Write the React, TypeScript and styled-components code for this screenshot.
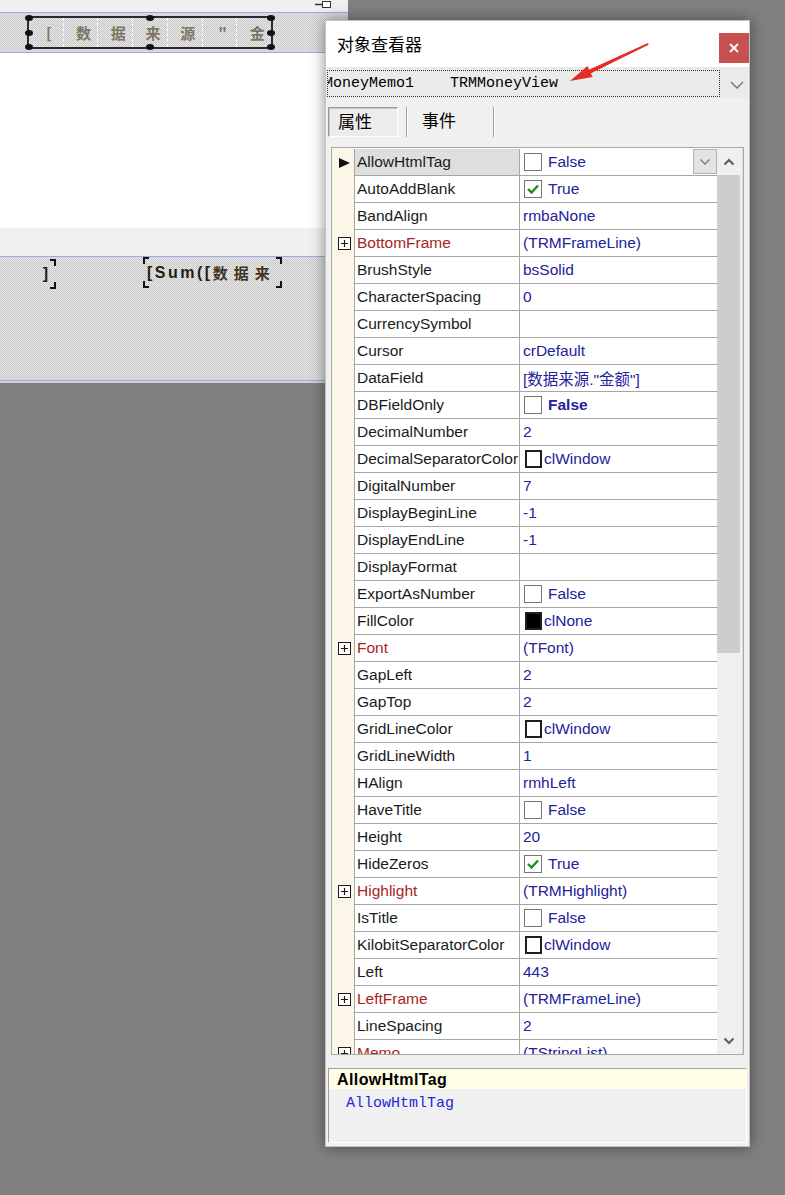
import React from 'react';
import styled, { createGlobalStyle } from 'styled-components';

const GlobalStyle = createGlobalStyle`
  html, body { margin: 0; padding: 0; }
  body {
    background: #808080;
    font-family: "Liberation Sans", Arial, "Noto Sans CJK SC", sans-serif;
  }
`;

const Screen = styled.div`
  position: relative;
  width: 785px;
  height: 1195px;
  overflow: hidden;
  background: #808080;
`;

/* ---------- report designer (left) ---------- */

const Designer = styled.div`
  width: 348px;
  display: flex;
  flex-direction: column;
`;

const TopStrip = styled.div`
  position: relative;
  height: 12px;
  background: #f0f0f0;
`;

const StripIcon = styled.svg`
  position: absolute;
  left: 314px;
  top: 0;
`;

const Band = styled.div<{ $h: number }>`
  position: relative;
  height: ${p => p.$h}px;
  border-top: 1px solid #a3a3f0;
  border-bottom: 1px solid #a3a3f0;
  background-color: #d8d8d8;
  background-image: repeating-conic-gradient(#c9c9c9 0 25%, #e6e6e6 0 50%);
  background-size: 2px 2px;
`;

const Blank = styled.div<{ $h: number; $bg: string }>`
  height: ${p => p.$h}px;
  background: ${p => p.$bg};
`;

const MemoBox = styled.div`
  position: absolute;
  left: 27px;
  top: 3px;
  width: 246px;
  height: 33px;
  box-sizing: border-box;
  border: 2px solid #2a2a2a;
  display: flex;
`;

const MemoCell = styled.div<{ $first?: boolean }>`
  flex: 1;
  display: flex;
  align-items: center;
  justify-content: center;
  padding-left: 6px;
  border-left: ${p => (p.$first ? 'none' : '1px dashed #ffffff')};
  font-family: "Noto Sans CJK SC", sans-serif;
  font-weight: 700;
  font-size: 15px;
  color: #7d7664;
`;

const Handle = styled.span<{ $x: number; $y: number }>`
  position: absolute;
  left: calc(${p => p.$x}% - 4px);
  top: calc(${p => p.$y}% - 3px);
  width: 8px;
  height: 6px;
  border-radius: 50%;
  background: #111;
`;

const FieldBox = styled.div<{ $l: number; $t: number; $w: number; $h: number; $right?: boolean }>`
  position: absolute;
  left: ${p => p.$l}px;
  top: ${p => p.$t}px;
  width: ${p => p.$w}px;
  height: ${p => p.$h}px;
  box-sizing: border-box;
  display: flex;
  align-items: center;
  justify-content: ${p => (p.$right ? 'flex-end' : 'flex-start')};
  padding: ${p => (p.$right ? '0 8px 0 0' : '0 0 0 4px')};
  font-weight: 700;
  font-size: 16px;
  color: #231d12;
  white-space: nowrap;
`;

const Corner = styled.span<{ $pos: 'tl' | 'tr' | 'bl' | 'br' }>`
  position: absolute;
  width: 4px;
  height: 5px;
  ${p => (p.$pos[0] === 't' ? 'top: 0; border-top: 2px solid #111;' : 'bottom: 0; border-bottom: 2px solid #111;')}
  ${p => (p.$pos[1] === 'l' ? 'left: 0; border-left: 2px solid #111;' : 'right: 0; border-right: 2px solid #111;')}
`;

const Latin = styled.span`
  letter-spacing: 2.5px;
`;

const Han = styled.span`
  font-family: "Noto Sans CJK SC", sans-serif;
  font-size: 15px;
  letter-spacing: 6px;
  color: #3f3522;
`;

/* ---------- object inspector window ---------- */

const Window = styled.div`
  position: absolute;
  left: 325px;
  top: 20px;
  width: 425px;
  height: 1127px;
  box-sizing: border-box;
  background: #f0f0f0;
  border: 1px solid #c4c4c4;
  box-shadow: 0 0 14px rgba(0, 0, 0, 0.45);
  display: flex;
  flex-direction: column;
`;

const TitleBar = styled.div`
  height: 46px;
  background: #ffffff;
  display: flex;
  align-items: flex-start;
  justify-content: space-between;
  padding-left: 11px;
`;

const TitleText = styled.div`
  margin-top: 10px;
  line-height: 26px;
  font-family: "Noto Sans CJK SC", sans-serif;
  font-size: 17px;
  color: #000;
`;

const CloseButton = styled.div`
  margin-top: 12px;
  width: 30px;
  height: 30px;
  background: #c75050;
  display: flex;
  align-items: center;
  justify-content: center;
`;

const Combo = styled.div`
  height: 31px;
  display: flex;
  align-items: center;
  background: #ebebeb;
`;

const ComboText = styled.div`
  margin: 2px 0 0 1px;
  width: 393px;
  height: 27px;
  box-sizing: border-box;
  border: 1px dotted #333;
  padding-top: 2px;
  font-family: "Liberation Mono", monospace;
  font-size: 15px;
  line-height: 22px;
  color: #000;
  white-space: pre;
  overflow: hidden;
  text-indent: -4px;
`;

const ComboArrow = styled.svg`
  margin-left: auto;
  margin-right: 5px;
  margin-top: 4px;
`;

const TabBar = styled.div`
  margin-top: 5px;
  height: 36px;
  display: flex;
  align-items: flex-start;
  padding: 4px 0 0 2px;
  box-sizing: border-box;
`;

const Tab = styled.div<{ $active?: boolean; $w: number; $pl: number }>`
  width: ${p => p.$w}px;
  height: 30px;
  box-sizing: border-box;
  padding-left: ${p => p.$pl}px;
  font-family: "Noto Sans CJK SC", sans-serif;
  font-size: 17px;
  line-height: 26px;
  color: #000;
  ${p =>
    p.$active
      ? `border-top: 1px solid #9a9a9a; border-left: 1px solid #9a9a9a;
         border-right: 1px solid #fff; border-bottom: 1px solid #fff;
         box-shadow: inset 1px 1px 0 #c8c8c8; background: #ececec;`
      : ''}
`;

const TabSep = styled.div<{ $ml: number }>`
  margin-left: ${p => p.$ml}px;
  width: 1px;
  height: 30px;
  background: #a0a0a0;
  border-right: 1px solid #fff;
`;

const Grid = styled.div`
  margin: 8px 0 0 5px;
  width: 413px;
  height: 908px;
  box-sizing: border-box;
  border: 1px solid #a9a9a9;
  display: flex;
  background: #fff;
`;

const Rows = styled.div`
  width: 385px;
  overflow: hidden;
  padding-top: 1px;
  background: linear-gradient(90deg, #fcf6e9 0 22px, #fff 22px);
`;

const Row = styled.div`
  display: grid;
  grid-template-columns: 22px 165px 198px;
  height: 27px;
`;

const Indicator = styled.div`
  background: #fcf6e9;
  display: flex;
  align-items: center;
  justify-content: center;
  padding-left: 2px;
`;

const NameCell = styled.div<{ $sub?: boolean; $selected?: boolean }>`
  border-left: 1px solid #a6a6a6;
  border-bottom: 1px solid #a6a6a6;
  padding-left: 2px;
  font-size: 15.5px;
  line-height: 26px;
  white-space: nowrap;
  overflow: hidden;
  color: ${p => (p.$sub ? '#a82424' : '#1b1b1b')};
  background: ${p => (p.$selected ? '#dedede' : '#fff')};
`;

const ValueCell = styled.div<{ $bold?: boolean }>`
  position: relative;
  border-left: 1px solid #a6a6a6;
  border-bottom: 1px solid #a6a6a6;
  padding-left: 3px;
  display: flex;
  align-items: center;
  font-size: 15.5px;
  font-weight: ${p => (p.$bold ? 700 : 400)};
  white-space: nowrap;
  overflow: hidden;
  color: #22229a;
  background: #fff;
  font-family: "Liberation Sans", Arial, "Noto Sans CJK SC", sans-serif;
`;

const CheckBox = styled.span`
  width: 18px;
  height: 18px;
  box-sizing: border-box;
  margin: 0 6px 0 1px;
  border: 1px solid #767676;
  background: #fff;
  display: flex;
  align-items: center;
  justify-content: center;
  flex: none;
`;

const Swatch = styled.span<{ $color: string }>`
  width: 17px;
  height: 18px;
  box-sizing: border-box;
  margin: 0 2px 0 2px;
  border: 2px solid #1f1f1f;
  background: ${p => p.$color};
  flex: none;
`;

const DropButton = styled.div`
  position: absolute;
  right: 0;
  top: 0;
  width: 24px;
  height: 25px;
  box-sizing: border-box;
  background: #e3e3e3;
  border: 1px solid #b0b0b0;
  display: flex;
  align-items: center;
  justify-content: center;
`;

const ScrollBar = styled.div`
  width: 26px;
  background: #f0f0f0;
  display: flex;
  flex-direction: column;
  border-right: 1px solid #dcdcdc;
  box-sizing: border-box;
`;

const ScrollBtn = styled.div`
  height: 27px;
  width: 23px;
  display: flex;
  align-items: center;
  justify-content: center;
  flex: none;
`;

const Thumb = styled.div`
  width: 23px;
  height: 478px;
  background: #cdcdcd;
  flex: none;
`;

const Track = styled.div`
  flex: 1;
`;

const HelpPanel = styled.div`
  margin: 13px 0 0 2px;
  width: 419px;
  height: 75px;
  box-sizing: border-box;
  border-top: 1px solid #a0a0a0;
  border-left: 1px solid #a0a0a0;
  border-right: 1px solid #fff;
  border-bottom: 1px solid #fff;
`;

const HelpHeader = styled.div`
  height: 20px;
  background: #fffde3;
  padding-left: 8px;
  font-weight: 700;
  font-size: 16px;
  letter-spacing: 0.4px;
  line-height: 22px;
  color: #000;
`;

const HelpBody = styled.div`
  padding-left: 17px;
  font-family: "Liberation Mono", monospace;
  font-size: 15px;
  line-height: 30px;
  color: #2626dc;
`;

const Arrow = styled.svg`
  position: absolute;
  left: 0;
  top: 0;
  pointer-events: none;
`;

/* ---------- data ---------- */

type Prop = {
  name: string;
  value?: string;
  check?: boolean;
  swatch?: string;
  sub?: boolean;
  bold?: boolean;
};

const props: Prop[] = [
  { name: 'AllowHtmlTag', value: 'False', check: false },
  { name: 'AutoAddBlank', value: 'True', check: true },
  { name: 'BandAlign', value: 'rmbaNone' },
  { name: 'BottomFrame', value: '(TRMFrameLine)', sub: true },
  { name: 'BrushStyle', value: 'bsSolid' },
  { name: 'CharacterSpacing', value: '0' },
  { name: 'CurrencySymbol', value: '' },
  { name: 'Cursor', value: 'crDefault' },
  { name: 'DataField', value: '[数据来源."金额"]' },
  { name: 'DBFieldOnly', value: 'False', check: false, bold: true },
  { name: 'DecimalNumber', value: '2' },
  { name: 'DecimalSeparatorColor', value: 'clWindow', swatch: '#fff' },
  { name: 'DigitalNumber', value: '7' },
  { name: 'DisplayBeginLine', value: '-1' },
  { name: 'DisplayEndLine', value: '-1' },
  { name: 'DisplayFormat', value: '' },
  { name: 'ExportAsNumber', value: 'False', check: false },
  { name: 'FillColor', value: 'clNone', swatch: '#000' },
  { name: 'Font', value: '(TFont)', sub: true },
  { name: 'GapLeft', value: '2' },
  { name: 'GapTop', value: '2' },
  { name: 'GridLineColor', value: 'clWindow', swatch: '#fff' },
  { name: 'GridLineWidth', value: '1' },
  { name: 'HAlign', value: 'rmhLeft' },
  { name: 'HaveTitle', value: 'False', check: false },
  { name: 'Height', value: '20' },
  { name: 'HideZeros', value: 'True', check: true },
  { name: 'Highlight', value: '(TRMHighlight)', sub: true },
  { name: 'IsTitle', value: 'False', check: false },
  { name: 'KilobitSeparatorColor', value: 'clWindow', swatch: '#fff' },
  { name: 'Left', value: '443' },
  { name: 'LeftFrame', value: '(TRMFrameLine)', sub: true },
  { name: 'LineSpacing', value: '2' },
  { name: 'Memo', value: '(TStringList)', sub: true },
];

const memoChars = ['[', '数', '据', '来', '源', '"', '金'];

const handles: [number, number][] = [
  [0, 0], [50, 0], [100, 0], [0, 50], [100, 50], [0, 100], [50, 100], [100, 100],
];

const Chevron = ({ up, color = '#606060' }: { up?: boolean; color?: string }) => (
  <svg width="12" height="8" viewBox="0 0 12 8">
    <path
      d={up ? 'M1.5 6.5 L6 2 L10.5 6.5' : 'M1.5 1.5 L6 6 L10.5 1.5'}
      fill="none"
      stroke={color}
      strokeWidth={up ? 2.2 : 1.4}
    />
  </svg>
);

const PlusBox = () => (
  <svg width="13" height="13" viewBox="0 0 13 13">
    <rect x="0.5" y="0.5" width="12" height="12" fill="#fff" stroke="#1a1a1a" />
    <path d="M3 6.5 H10 M6.5 3 V10" stroke="#1a1a1a" strokeWidth="1.2" />
  </svg>
);

const Pointer = () => (
  <svg width="11" height="10" viewBox="0 0 11 10">
    <path d="M0 0 L11 5 L0 10 Z" fill="#111" />
  </svg>
);

const Tick = () => (
  <svg width="14" height="12" viewBox="0 0 14 12">
    <path d="M2 6 L5.5 9.5 L12 2.5" fill="none" stroke="#1e8c1e" strokeWidth="2.4" />
  </svg>
);

export default function App() {
  return (
    <>
      <GlobalStyle />
      <Screen>
        <Designer>
          <TopStrip>
            <StripIcon width="18" height="10" viewBox="0 0 18 10">
              <path d="M1 4.5 H8" stroke="#333" strokeWidth="1.5" />
              <rect x="8.5" y="1.5" width="8" height="6" fill="#fff" stroke="#333" />
            </StripIcon>
          </TopStrip>
          <Band $h={39}>
            <MemoBox>
              {memoChars.map((c, i) => (
                <MemoCell key={i} $first={i === 0}>{c}</MemoCell>
              ))}
              {handles.map(([x, y], i) => (
                <Handle key={i} $x={x} $y={y} />
              ))}
            </MemoBox>
          </Band>
          <Blank $h={175} $bg="#ffffff" />
          <Blank $h={28} $bg="#f0f0f0" />
          <Band $h={123}>
            <FieldBox $l={-10} $t={2} $w={66} $h={30} $right>
              ]
              <Corner $pos="tr" />
              <Corner $pos="br" />
            </FieldBox>
            <FieldBox $l={143} $t={0} $w={139} $h={31}>
              <Latin>[Sum([</Latin>
              <Han>数据来</Han>
              <Corner $pos="tl" />
              <Corner $pos="tr" />
              <Corner $pos="bl" />
              <Corner $pos="br" />
            </FieldBox>
          </Band>
          <Blank $h={2} $bg="#d2d2d2" />
        </Designer>

        <Window>
          <TitleBar>
            <TitleText>对象查看器</TitleText>
            <CloseButton>
              <svg width="10" height="10" viewBox="0 0 10 10">
                <path d="M1 1 L9 9 M9 1 L1 9" stroke="#fff" strokeWidth="1.8" />
              </svg>
            </CloseButton>
          </TitleBar>

          <Combo>
            <ComboText>{'MoneyMemo1    TRMMoneyView'}</ComboText>
            <ComboArrow width="14" height="8" viewBox="0 0 14 8">
              <path d="M1 1 L7 7 L13 1" fill="none" stroke="#707070" strokeWidth="1.3" />
            </ComboArrow>
          </Combo>

          <TabBar>
            <Tab $active $w={70} $pl={9}>属性</Tab>
            <TabSep $ml={8} />
            <Tab $w={85} $pl={14}>事件</Tab>
            <TabSep $ml={0} />
          </TabBar>

          <Grid>
            <Rows>
              {props.map((p, i) => (
                <Row key={p.name}>
                  <Indicator>{i === 0 ? <Pointer /> : p.sub ? <PlusBox /> : null}</Indicator>
                  <NameCell $sub={p.sub} $selected={i === 0}>{p.name}</NameCell>
                  <ValueCell $bold={p.bold}>
                    {p.check !== undefined && <CheckBox>{p.check && <Tick />}</CheckBox>}
                    {p.swatch && <Swatch $color={p.swatch} />}
                    {p.value}
                    {i === 0 && (
                      <DropButton>
                        <Chevron color="#7a7a7a" />
                      </DropButton>
                    )}
                  </ValueCell>
                </Row>
              ))}
            </Rows>
            <ScrollBar>
              <ScrollBtn>
                <Chevron up />
              </ScrollBtn>
              <Thumb />
              <Track />
              <ScrollBtn>
                <svg width="12" height="8" viewBox="0 0 12 8">
                  <path d="M1.5 1.5 L6 6 L10.5 1.5" fill="none" stroke="#606060" strokeWidth="2.2" />
                </svg>
              </ScrollBtn>
            </ScrollBar>
          </Grid>

          <HelpPanel>
            <HelpHeader>AllowHtmlTag</HelpHeader>
            <HelpBody>AllowHtmlTag</HelpBody>
          </HelpPanel>
        </Window>

        <Arrow width="785" height="120" viewBox="0 0 785 120">
          <path d="M648.3 44.4 L647.7 43.6 L589.4 70.1 L590.6 72.9 Z" fill="#e62b2b" stroke="#e62b2b" strokeWidth="1" />
          <path d="M570 81 L587.4 66.1 L592.6 76.9 Z" fill="#e62b2b" />
        </Arrow>
      </Screen>
    </>
  );
}
